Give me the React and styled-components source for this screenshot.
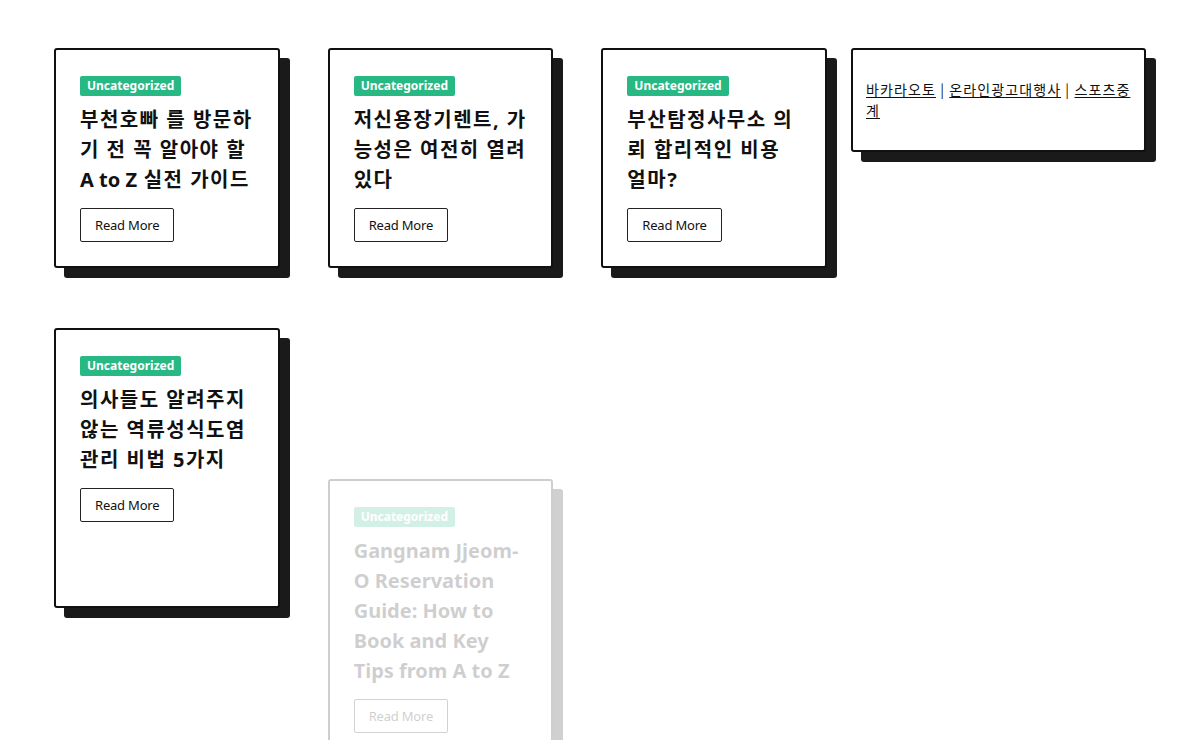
import React from "react";
import styled, { createGlobalStyle, css } from "styled-components";

const Global = createGlobalStyle`
  html, body { margin: 0; padding: 0; background: #fff; }
  body { font-family: "Noto Sans", "Noto Sans CJK KR", sans-serif; color: #111; }
  * { box-sizing: border-box; }
`;

const Page = styled.div`
  display: flex;
  align-items: flex-start;
  gap: 24px;
  padding: 48px 0 0 54px;
  width: 1200px;
  height: 740px;
  overflow: hidden;
`;

const Main = styled.main`
  width: 773px;
  display: grid;
  grid-template-columns: repeat(3, 1fr);
  column-gap: 48px;
  row-gap: 60px;
  align-items: stretch;
`;

const Sidebar = styled.aside`
  width: 295px;
`;

const cardFrame = css`
  background: #fff;
  border: 2px solid #111;
  border-radius: 3px;
  box-shadow: 10px 10px 0 #1a1a1a;
`;

const Card = styled.article`
  ${cardFrame};
  padding: 26px 24px 24px;
  display: flex;
  flex-direction: column;
  align-items: flex-start;
  ${(p) =>
    p.$entering &&
    css`
      opacity: 0.2;
      transform: translateY(151px);
    `}
`;

const Badge = styled.span`
  display: inline-block;
  height: 20px;
  line-height: 20px;
  padding: 0 7px;
  background: #27b884;
  color: #fff;
  font-size: 12px;
  font-weight: 700;
  border-radius: 2px;
`;

const Title = styled.h2`
  margin: 9px 0 13px;
  font-size: 20px;
  line-height: 30px;
  font-weight: 700;
  color: #111;
  word-break: normal;
  overflow-wrap: break-word;
  letter-spacing: ${(p) => (p.$korean ? "1.5px" : "0")};
`;

const Latin = styled.span`
  letter-spacing: 0;
`;

const ReadMore = styled.a`
  display: inline-block;
  height: 34px;
  line-height: 32px;
  padding: 0 14px;
  border: 1px solid #222;
  border-radius: 2px;
  font-size: 13px;
  letter-spacing: -0.2px;
  color: #111;
  text-decoration: none;
`;

const Widget = styled.div`
  ${cardFrame};
  padding: 29px 13px;
  font-family: "Noto Sans CJK KR", sans-serif;
  font-size: 14px;
  line-height: 21px;
  letter-spacing: 1.1px;
  color: #111;
`;

const WidgetLink = styled.a`
  color: #111;
  text-decoration: underline;
  text-underline-offset: 2px;
`;

const posts = [
  { title: ["부천호빠 를 방문하기 전 꼭 알아야 할 ", { latin: "A to Z" }, " 실전 가이드"], korean: true },
  { title: ["저신용장기렌트, 가능성은 여전히 열려있다"], korean: true },
  { title: ["부산탐정사무소 의뢰 합리적인 비용 얼마?"], korean: true },
  { title: ["의사들도 알려주지 않는 역류성식도염 관리 비법 5가지"], korean: true },
  { title: ["Gangnam Jjeom-O Reservation Guide: How to Book and Key Tips from A to Z"], entering: true },
];

const links = ["바카라오토", "온라인광고대행사", "스포츠중계"];

export default function App() {
  return (
    <>
      <Global />
      <Page>
        <Main>
          {posts.map((p, i) => (
            <Card key={i} $entering={p.entering}>
              <Badge>Uncategorized</Badge>
              <Title $korean={p.korean}>
                {p.title.map((seg, j) =>
                  typeof seg === "string" ? (
                    <React.Fragment key={j}>{seg}</React.Fragment>
                  ) : (
                    <Latin key={j}>{seg.latin}</Latin>
                  )
                )}
              </Title>
              <ReadMore href="#">Read More</ReadMore>
            </Card>
          ))}
        </Main>
        <Sidebar>
          <Widget>
            {links.map((l, i) => (
              <React.Fragment key={l}>
                {i > 0 && " | "}
                <WidgetLink href="#">{l}</WidgetLink>
              </React.Fragment>
            ))}
          </Widget>
        </Sidebar>
      </Page>
    </>
  );
}
